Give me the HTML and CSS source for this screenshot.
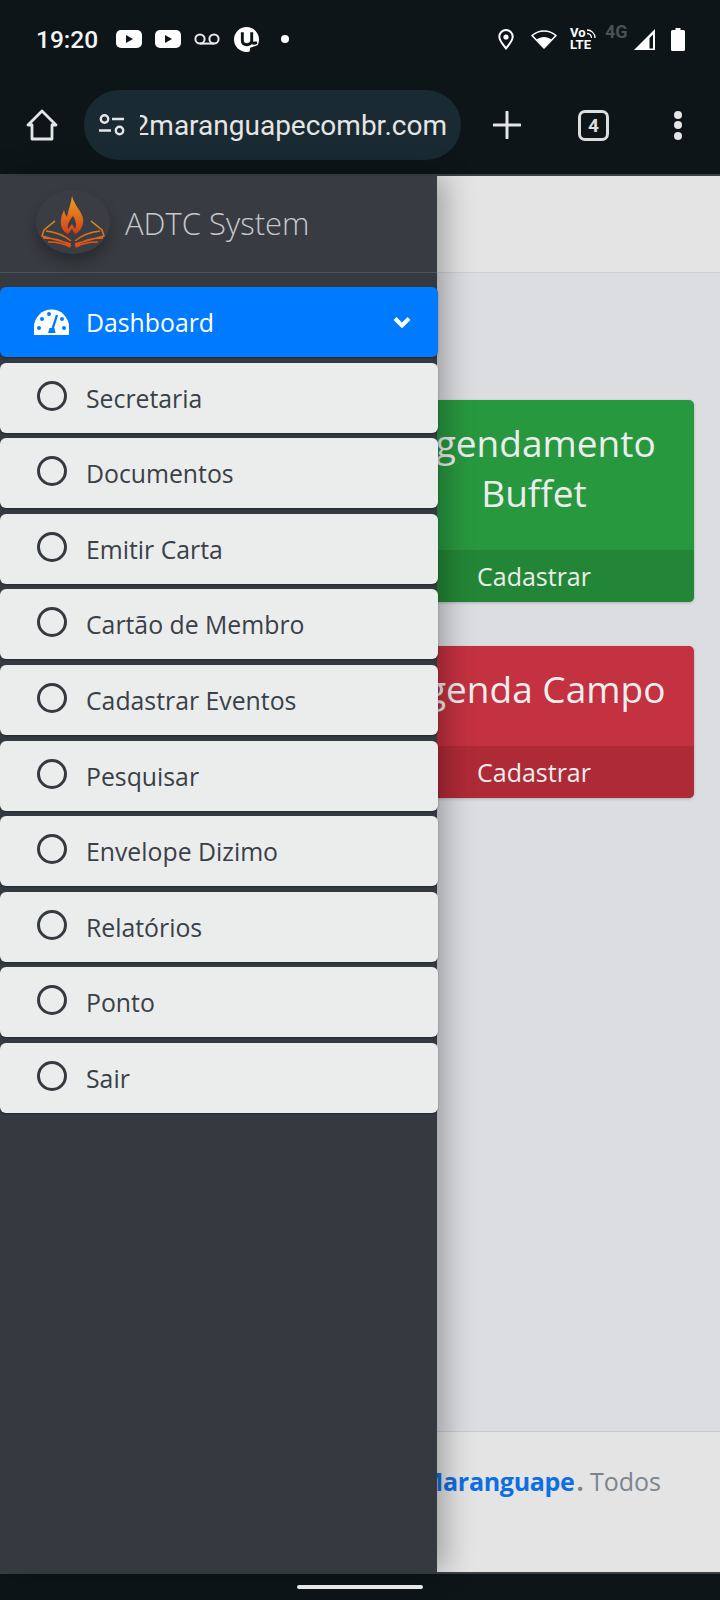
FILE: index.html
```html
<!DOCTYPE html>
<html lang="pt-BR">
<head>
    <meta charset="UTF-8">
    <meta name="viewport" content="width=device-width, initial-scale=1.0">
    <title>ADTC System</title>
    <link rel="stylesheet" href="styles.css">
</head>
<body>
    <div class="phone">
        <div class="status-bar">
            <div class="status-left">
                <span class="clock">19:20</span>
                <svg class="yt" width="26" height="18" viewBox="0 0 26 18"><rect width="26" height="18" rx="5" fill="#fff"/><path d="M10 5l7 4-7 4z" fill="#0d1518"/></svg>
                <svg class="yt" width="26" height="18" viewBox="0 0 26 18"><rect width="26" height="18" rx="5" fill="#fff"/><path d="M10 5l7 4-7 4z" fill="#0d1518"/></svg>
                <svg class="vm" width="26" height="12" viewBox="0 0 26 12"><circle cx="6" cy="6" r="4.6" fill="none" stroke="#e8eaea" stroke-width="2"/><circle cx="20" cy="6" r="4.6" fill="none" stroke="#e8eaea" stroke-width="2"/><path d="M6 10.6h14" stroke="#e8eaea" stroke-width="2"/></svg>
                <svg class="ut" width="25" height="25" viewBox="0 0 24 24"><circle cx="12" cy="12" r="12" fill="#fff"/><path d="M8 5v8q0 4 4.500 4 3.500 0 4.500-3M17 5v9q0 2.500 5 1" fill="none" stroke="#0d1518" stroke-width="2.800"/><path d="M15 24l.500-4 8.500-3v7z" fill="#0d1518"/></svg>
                <span class="dot"></span>
            </div>
            <div class="status-right">
                <svg class="loc" width="16" height="21" viewBox="0 0 16 21"><path d="M8 19.500C4 14.500 1.300 11.500 1.300 7.800a6.700 6.700 0 0 1 13.400 0C14.700 11.500 12 14.500 8 19.500z" fill="none" stroke="#fff" stroke-width="2"/><circle cx="8" cy="8" r="2.600" fill="#fff"/></svg>
                <svg class="wifi" width="26" height="20" viewBox="0 0 26 20"><path d="M13 19L1 6.500C8 .5 18 .5 25 6.500z" fill="none" stroke="#fff" stroke-width="1.600" stroke-linejoin="round"/><path d="M13 19L5.500 10.500C10 7 16 7 20.500 10.500z" fill="#fff"/></svg>
                <div class="volte">
                    <div class="volte-top">Vo<svg width="10" height="9" viewBox="0 0 10 9"><path d="M1 1c4 0 8 3 8 8M1 4.500c2.500 0 4.500 2 4.500 4.500" fill="none" stroke="#fff" stroke-width="1.300"/></svg></div>
                    <div>LTE</div>
                </div>
                <span class="net">4G</span>
                <svg class="signal" width="22" height="21" viewBox="0 0 22 21"><path d="M0 21L21 0v21z" fill="#fff"/><path d="M15.500 9v10.500h3.500V5.500z" fill="#0d1518"/></svg>
                <svg class="batt" width="14" height="23" viewBox="0 0 14 23"><path d="M4.500 0h5v2h3q1.500 0 1.500 1.500V21.500q0 1.500-1.500 1.500H1.500Q0 23 0 21.500V3.500Q0 2 1.500 2h3z" fill="#fff"/></svg>
            </div>
        </div>

        <div class="toolbar">
            <svg class="home" width="32" height="32" viewBox="0 0 32 32"><path d="M2 16L16 2l14 14h-4v14H6V16z" fill="none" stroke="#e4e6e6" stroke-width="2.800" stroke-linejoin="round"/></svg>
            <div class="url-pill">
                <svg class="tune" width="26" height="22" viewBox="0 0 26 22"><circle cx="5.500" cy="5" r="3.700" fill="none" stroke="#e4e6e6" stroke-width="2.400"/><path d="M13 5h12M0 16.500h12" stroke="#e4e6e6" stroke-width="2.400"/><circle cx="20.500" cy="16.500" r="3.700" fill="none" stroke="#e4e6e6" stroke-width="2.400"/></svg>
                <div class="url"><span>ad2maranguapecombr.com</span></div>
            </div>
            <svg class="plus" width="28" height="28" viewBox="0 0 28 28"><path d="M14 1v26M1 14h26" stroke="#e4e6e6" stroke-width="3" stroke-linecap="round"/></svg>
            <div class="tabs">4</div>
            <div class="dots"><i></i><i></i><i></i></div>
        </div>

        <div class="stage">
            <div class="content">
                <div class="content-header"></div>
                <div class="content-body">
                    <div class="card green">
                        <div class="card-title">Agendamento Buffet</div>
                        <div class="card-foot">Cadastrar</div>
                    </div>
                    <div class="card red">
                        <div class="card-title">Agenda Campo</div>
                        <div class="card-foot">Cadastrar</div>
                    </div>
                </div>
                <div class="content-footer"><b>ADTC Maranguape<span>.</span></b> Todos</div>
            </div>

            <div class="sidebar">
                <div class="brand">
                    <div class="logo">
                        <svg width="66" height="54" viewBox="0 0 66 54">
                            <defs>
                                <linearGradient id="fl" x1="0" y1="0" x2="0" y2="1"><stop offset="0" stop-color="#e9a51f"/><stop offset="1" stop-color="#d63c18"/></linearGradient>
                                <linearGradient id="bk" gradientUnits="userSpaceOnUse" x1="0" y1="26" x2="0" y2="52"><stop offset="0" stop-color="#d99a1c"/><stop offset="1" stop-color="#e8480f"/></linearGradient>
                            </defs>
                            <path d="M32 1C34 10 41 15 43 23C44 30 41 36 35 39L32 34L28 39C23 37 20 31 21 25C21 21 23 18 24 15C25 19 26 21 27 22C28 15 31 9 32 1Z" fill="url(#fl)"/>
                            <path d="M33 21C36 26 37 30 35 34L32 29L28 34C27 30 29 26 33 21Z" fill="#3a3e44"/>
                            <g fill="none" stroke="url(#bk)" stroke-width="1.500">
                                <path d="M15 26L4 35L2 41L31 49M6 36C15 37 25 41 31 46M3 43C14 43 24 46 31 51M8 47C16 47 25 49 30 52"/>
                                <path d="M51 26L62 35L64 41L35 49M60 36C51 37 41 41 35 46M63 43C52 43 42 46 35 51M58 47C50 47 41 49 36 52"/>
                            </g>
                        </svg>
                    </div>
                    <span class="brand-text">ADTC System</span>
                </div>
                <ul class="menu">
                    <li class="menu-item active">
                        <svg class="gauge" width="35" height="26" viewBox="0 0 35 26"><path d="M0 26V18a17.500 17.500 0 0 1 35 0v8z" fill="#fff"/><g fill="#007bff"><circle cx="5" cy="19" r="2"/><circle cx="30" cy="19" r="2"/><circle cx="8" cy="10" r="2"/><circle cx="15" cy="5" r="2"/><circle cx="28" cy="10" r="2"/></g><path d="M23 6l-4.500 14" stroke="#007bff" stroke-width="2.400"/><path d="M14 24l1.500-5h5l1 5z" fill="#007bff"/></svg>
                        <span>Dashboard</span>
                        <svg class="chev" width="18" height="12" viewBox="0 0 18 12"><path d="M2 2.500l7 7 7-7" fill="none" stroke="#fff" stroke-width="4"/></svg>
                    </li>
                    <li class="menu-item"><i class="ring"></i><span>Secretaria</span></li>
                    <li class="menu-item"><i class="ring"></i><span>Documentos</span></li>
                    <li class="menu-item"><i class="ring"></i><span>Emitir Carta</span></li>
                    <li class="menu-item"><i class="ring"></i><span>Cartão de Membro</span></li>
                    <li class="menu-item"><i class="ring"></i><span>Cadastrar Eventos</span></li>
                    <li class="menu-item"><i class="ring"></i><span>Pesquisar</span></li>
                    <li class="menu-item"><i class="ring"></i><span>Envelope Dizimo</span></li>
                    <li class="menu-item"><i class="ring"></i><span>Relatórios</span></li>
                    <li class="menu-item"><i class="ring"></i><span>Ponto</span></li>
                    <li class="menu-item"><i class="ring"></i><span>Sair</span></li>
                </ul>
            </div>
        </div>

        <div class="nav-bar"><span class="handle"></span></div>
    </div>
</body>
</html>
```

FILE: styles.css
```css
* {
    margin: 0;
    padding: 0;
    box-sizing: border-box;
}
body {
    background-color: #0d1518;
    font-family: "Open Sans", "Noto Sans", sans-serif;
}
.phone {
    width: 720px;
    height: 1600px;
    display: flex;
    flex-direction: column;
    overflow: hidden;
}

/* status bar */
.status-bar {
    height: 78px;
    padding: 0 35px 0 36px;
    display: flex;
    align-items: center;
    justify-content: space-between;
    color: #fff;
    font-family: Roboto, sans-serif;
}
.status-left, .status-right {
    display: flex;
    align-items: center;
}
.clock {
    width: 61px;
    font-size: 24.500px;
    font-weight: 500;
    color: #f2f4f4;
    white-space: nowrap;
}
.yt {
    margin-left: 13px;
}
.status-left .clock + .yt {
    margin-left: 19px;
}
.vm {
    margin-left: 13px;
}
.ut {
    margin-left: 14px;
}
.dot {
    width: 8px;
    height: 8px;
    margin-left: 22px;
    border-radius: 50%;
    background-color: #fff;
}
.wifi {
    margin-left: 17px;
}
.volte {
    width: 26px;
    margin-left: 13px;
    font-size: 13px;
    font-weight: 700;
    line-height: 12px;
}
.volte-top {
    display: flex;
    align-items: center;
}
.net {
    width: 23px;
    margin: 0 0 14px 9px;
    font-size: 18px;
    line-height: 14px;
    font-weight: 700;
    color: #4a5053;
    white-space: nowrap;
}
.signal {
    margin-left: 6px;
}
.batt {
    margin-left: 15px;
}

/* browser toolbar */
.toolbar {
    height: 96px;
    padding: 0 0 2px 26px;
    display: flex;
    align-items: center;
}
.home {
    flex: none;
}
.url-pill {
    width: 377px;
    height: 70px;
    margin-left: 26px;
    padding: 0 14px 0 15px;
    border-radius: 35px;
    background-color: #1a2a32;
    display: flex;
    align-items: center;
    flex: none;
}
.tune {
    flex: none;
}
.url {
    flex: 1;
    margin-left: 15px;
    overflow: hidden;
    display: flex;
    justify-content: flex-end;
    font-family: Roboto, sans-serif;
    font-size: 28px;
    color: #e4e6e6;
    white-space: nowrap;
}
.plus {
    margin-left: 32px;
    flex: none;
}
.tabs {
    width: 31px;
    height: 31px;
    margin-left: 57px;
    border: 3px solid #dcdede;
    border-radius: 7px;
    font-family: Roboto, sans-serif;
    font-size: 19px;
    font-weight: 700;
    line-height: 25px;
    text-align: center;
    color: #dcdede;
    flex: none;
}
.dots {
    margin-left: 65px;
    display: flex;
    flex-direction: column;
    gap: 2.500px;
}
.dots i {
    display: block;
    width: 8px;
    height: 8px;
    border-radius: 50%;
    background-color: #e4e6e6;
}

/* page under the menu */
.stage {
    position: relative;
    flex: 1;
    border-top: 2px solid #3a4045;
    border-bottom: 2px solid #3a4045;
    min-height: 0;
}
.content {
    height: 100%;
    display: flex;
    flex-direction: column;
    background-color: #dcdde1;
}
.content-header {
    height: 97px;
    background-color: #e4e4e4;
    border-bottom: 1px solid #cfd0d3;
    flex: none;
}
.content-body {
    flex: 1;
    padding: 127px 26px 0 374px;
    display: flex;
    flex-direction: column;
    gap: 44px;
}
.card {
    border-radius: 5px;
    color: #eceeee;
    text-align: center;
    overflow: hidden;
    box-shadow: 0 1px 3px rgba(0, 0, 0, 0.2);
}
.card-title {
    padding: 18px 20px 32px;
    font-size: 37px;
    line-height: 50px;
}
.card-foot {
    height: 52px;
    font-size: 25px;
    line-height: 52px;
}
.green {
    background-color: #28983f;
}
.green .card-foot {
    background-color: #238636;
}
.red {
    background-color: #c43140;
}
.red .card-foot {
    background-color: #af2a37;
}
.content-footer {
    height: 141px;
    padding: 32px 59px 0 0;
    background-color: #e4e4e4;
    border-top: 1px solid #c8c9cc;
    font-size: 25px;
    line-height: 34px;
    text-align: right;
    color: #7c858d;
    flex: none;
}
.content-footer b {
    color: #0f6fe0;
    letter-spacing: -0.3px;
}
.content-footer b span {
    margin-left: 2px;
    color: #7c858d;
}

/* side menu */
.sidebar {
    position: absolute;
    top: 0;
    bottom: 0;
    left: 0;
    width: 437px;
    background-color: #343a40;
    box-shadow: 8px 0 28px rgba(0, 0, 0, 0.3);
}
.brand {
    height: 97px;
    padding-left: 36px;
    background-color: #383c42;
    border-bottom: 1px solid #4f5459;
    display: flex;
    align-items: center;
}
.logo {
    width: 74px;
    height: 64px;
    margin-top: -4px;
    border-radius: 50%;
    background-color: #3a3e44;
    box-shadow: 0 8px 14px rgba(0, 0, 0, 0.3);
    display: flex;
    align-items: center;
    justify-content: center;
    flex: none;
}
.brand-text {
    margin: -2px 0 0 15px;
    font-size: 31px;
    font-weight: 300;
    color: #c6c8ca;
    white-space: nowrap;
}
.menu {
    list-style: none;
    width: 438px;
    padding-top: 14px;
    display: flex;
    flex-direction: column;
    gap: 5.600px;
}
.menu-item {
    height: 70px;
    padding: 0 19px 0 37px;
    border-radius: 6px;
    background-color: #ebeded;
    box-shadow: 0 1px 2px rgba(0, 0, 0, 0.3);
    display: flex;
    align-items: center;
    font-size: 24.800px;
    color: #3a4047;
    white-space: nowrap;
}
.menu-item span {
    margin-left: 19px;
    flex: 1;
}
.ring {
    width: 30px;
    height: 30px;
    margin-top: -4px;
    border: 3px solid #343a40;
    border-radius: 50%;
    flex: none;
}
.active {
    padding: 0 27px 0 34px;
    background-color: #007bff;
    color: #fff;
}
.active span {
    margin-left: 17px;
}
.gauge {
    flex: none;
}
.chev {
    flex: none;
}

/* android nav bar */
.nav-bar {
    height: 26px;
    display: flex;
    justify-content: center;
    align-items: center;
}
.handle {
    width: 126px;
    height: 4px;
    border-radius: 2px;
    background-color: #f2f2f2;
}
```
